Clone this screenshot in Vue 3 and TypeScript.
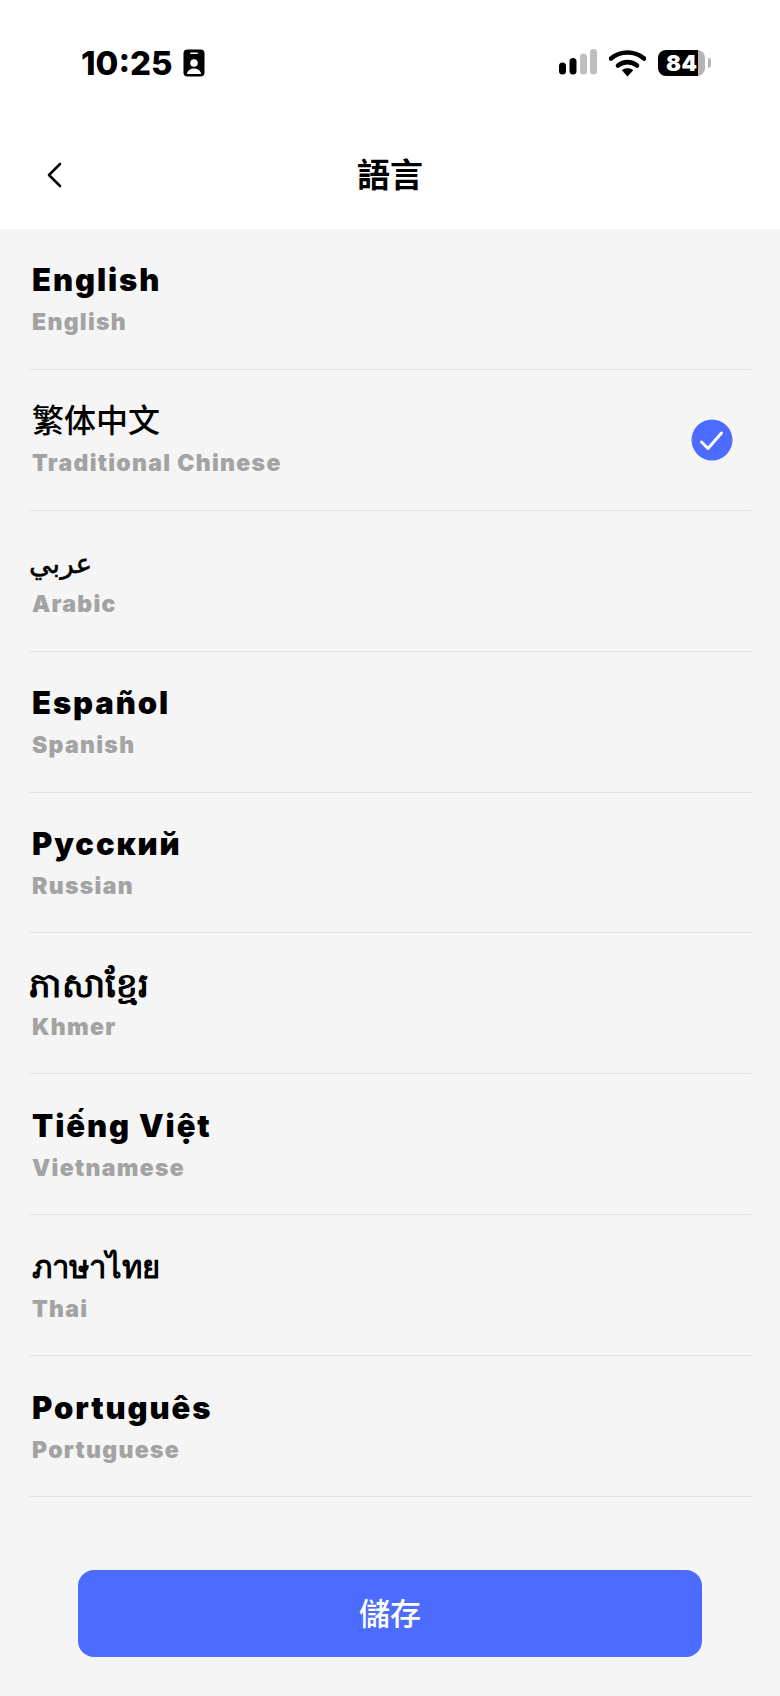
<template>
  <div class="screen">
    <header class="top">
      <div class="status-bar">
        <div class="status-left">
          <span class="time">10:25</span>
          <svg class="id-icon" width="22" height="28" viewBox="0 0 22 28">
            <rect x="0.5" y="0.5" width="21" height="27" rx="4" fill="#000" />
            <rect x="7" y="3.5" width="8" height="1.6" rx="0.8" fill="#fff" />
            <circle cx="11" cy="14" r="3.800" fill="#fff" />
            <path d="M4 25c0-3 3-5.500 7-5.500s7 2.500 7 5.500z" fill="#fff" />
          </svg>
        </div>
        <div class="status-right">
          <svg width="38" height="26" viewBox="0 0 38 26">
            <rect x="0" y="13.500" width="7" height="12" rx="3.500" fill="#000" />
            <rect x="10.500" y="9" width="7" height="16.500" rx="3.500" fill="#000" />
            <rect x="21" y="4.500" width="7" height="21" rx="3.500" fill="#bfbfbf" />
            <rect x="31" y="0" width="7" height="25.500" rx="3.500" fill="#bfbfbf" />
          </svg>
          <svg width="37" height="28" viewBox="0 0 37 28">
            <path d="M2 9.500C11.500 1.500 25.500 1.500 35 9.500" fill="none" stroke="#000" stroke-width="4.600" stroke-linecap="round" />
            <path d="M9 16.500C14.700 12 22.300 12 28 16.500" fill="none" stroke="#000" stroke-width="4.600" stroke-linecap="round" />
            <path d="M12.800 21.200C16 18.600 21 18.600 24.200 21.200L18.500 27.500z" fill="#000" />
          </svg>
          <div class="battery">
            <div class="battery-body">
              <span class="battery-level">84</span>
            </div>
            <span class="battery-nub"></span>
          </div>
        </div>
      </div>
      <div class="nav">
        <button class="back" type="button" aria-label="back">
          <svg width="16" height="26" viewBox="0 0 16 26">
            <path d="M14 2L3 13l11 11" fill="none" stroke="#000" stroke-width="2.600" stroke-linecap="round" stroke-linejoin="round" />
          </svg>
        </button>
        <h1 class="title">語言</h1>
      </div>
    </header>

    <ul class="list">
      <li v-for="lang in languages" :key="lang.sub" class="row">
        <div class="labels">
          <span class="name" :class="lang.script">{{ lang.name }}</span>
          <span class="sub">{{ lang.sub }}</span>
        </div>
        <svg v-if="lang.selected" class="check" width="42" height="42" viewBox="0 0 42 42">
          <circle cx="21" cy="21" r="20.500" fill="#4c6cff" />
          <path d="M10.500 23l6.500 6.500L30.500 14" fill="none" stroke="#fff" stroke-width="3" stroke-linecap="round" stroke-linejoin="round" />
        </svg>
      </li>
    </ul>

    <div class="footer">
      <button class="save" type="button">儲存</button>
    </div>
  </div>
</template>

<script setup lang="ts">
  interface Language {
    name: string
    sub: string
    script?: string
    selected?: boolean
  }

  const languages: Language[] = [
    { name: 'English', sub: 'English' },
    { name: '繁体中文', sub: 'Traditional Chinese', script: 'cjk', selected: true },
    { name: 'عربي', sub: 'Arabic', script: 'arabic' },
    { name: 'Español', sub: 'Spanish' },
    { name: 'Русский', sub: 'Russian' },
    { name: 'ភាសាខ្មែរ', sub: 'Khmer', script: 'khmer' },
    { name: 'Tiếng Việt', sub: 'Vietnamese' },
    { name: 'ภาษาไทย', sub: 'Thai', script: 'thai' },
    { name: 'Português', sub: 'Portuguese' },
  ]
</script>

<style>
  html,
  body {
    margin: 0;
    background: #f5f5f5;
  }
</style>

<style scoped>
  .screen {
    width: 780px;
    height: 1696px;
    overflow: hidden;
    background: #f5f5f5;
    font-family: Inter, "Noto Sans CJK TC", "DejaVu Sans", sans-serif;
    color: #000;
  }

  .top {
    background: #fff;
  }

  .status-bar {
    height: 125px;
    box-sizing: border-box;
    padding: 49px 69px 0 81px;
    display: flex;
    justify-content: space-between;
    align-items: flex-start;
  }

  .status-left {
    display: flex;
    align-items: center;
    gap: 10px;
  }

  .time {
    font-size: 33px;
    line-height: 28px;
    font-weight: 800;
  }

  .status-right {
    display: flex;
    align-items: flex-start;
    gap: 12px;
  }

  .battery {
    display: flex;
    align-items: center;
    gap: 3px;
    height: 26px;
    margin-top: 1px;
  }

  .battery-body {
    width: 47px;
    height: 26px;
    box-sizing: border-box;
    border-radius: 8px;
    background: linear-gradient(90deg, #000 0, #000 85%, #b5b5b5 85%, #b5b5b5 100%);
    display: flex;
    align-items: center;
    padding-left: 8px;
  }

  .battery-level {
    color: #fff;
    font-size: 22px;
    line-height: 26px;
    font-weight: 900;
    letter-spacing: 0.500px;
  }

  .battery-nub {
    width: 3px;
    height: 10px;
    background: #b5b5b5;
    border-radius: 0 3px 3px 0;
  }

  .nav {
    height: 104px;
    position: relative;
    display: flex;
    align-items: flex-start;
    justify-content: center;
  }

  .back {
    position: absolute;
    left: 46px;
    top: 37px;
    padding: 0;
    border: 0;
    background: none;
    line-height: 0;
  }

  .title {
    margin: 29px 0 0;
    font-size: 33px;
    line-height: 42px;
    font-weight: 700;
  }

  .list {
    list-style: none;
    margin: 0;
    padding: 0 29px;
  }

  .row {
    height: 140.900px;
    box-sizing: border-box;
    border-bottom: 1px solid #e2e2e2;
    padding-left: 3px;
    padding-right: 18px;
    display: flex;
    align-items: center;
    justify-content: space-between;
  }

  .labels {
    display: flex;
    flex-direction: column;
    gap: 7px;
    margin-top: -2px;
  }

  .name {
    font-size: 31px;
    line-height: 42px;
    font-weight: 900;
    letter-spacing: 1.900px;
  }

  .name.cjk {
    font-size: 32px;
    font-weight: 500;
    letter-spacing: 0;
  }

  .name.arabic {
    font-size: 28px;
    line-height: 39px;
    padding-top: 3px;
    font-weight: 500;
    letter-spacing: 0;
    margin-left: -3px;
    align-self: flex-start;
    -webkit-text-stroke: 0.500px #000;
  }

  .name.khmer {
    font-size: 34px;
    font-weight: 600;
    letter-spacing: 0;
    margin-left: -3px;
  }

  .name.thai {
    font-weight: 600;
    letter-spacing: 0;
  }

  .sub {
    font-size: 23px;
    line-height: 28px;
    font-weight: 900;
    letter-spacing: 1.300px;
    color: #a3a3a3;
  }

  .footer {
    display: flex;
    justify-content: center;
    padding-top: 73px;
  }

  .save {
    width: 624px;
    height: 87px;
    padding: 0 0 4px;
    border: 0;
    border-radius: 16px;
    background: #4c6cff;
    color: #fff;
    font-family: inherit;
    font-size: 31px;
    font-weight: 500;
  }
</style>
